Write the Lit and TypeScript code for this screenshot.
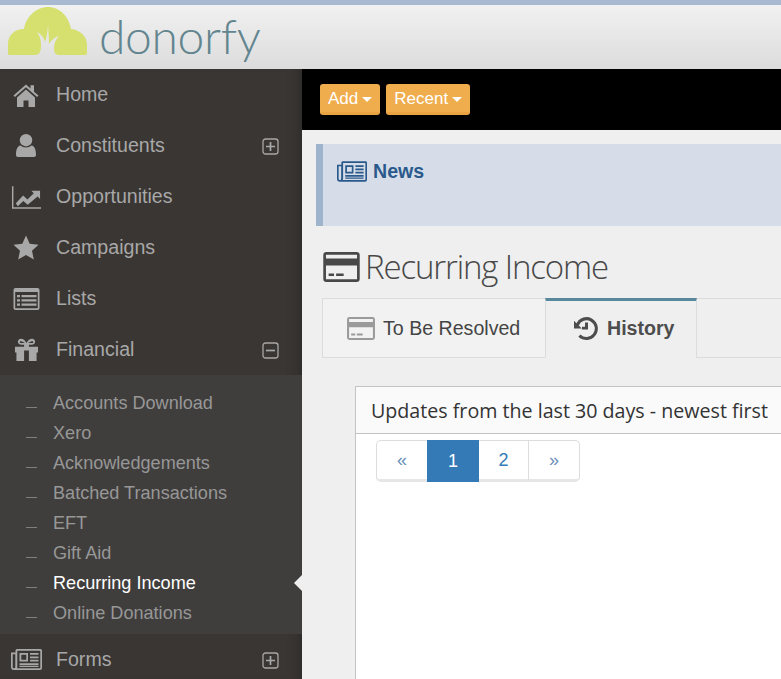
import { LitElement, html, css, svg } from "lit";
import { customElement } from "lit/decorators.js";

const I = {
  home: svg`<path d="M1.500 13.500 14 2.500l4.500 4V3.200h3.500v6.500l4.500 3.800-1.400 1.600L14 5.300 2.900 15.100z"/><path d="M5 15.500 14 7.600l9 7.900V25h-6.500v-6.500h-5V25H5z"/>`,
  user: svg`<circle cx="10" cy="6.200" r="6.200"/><path d="M2 23c-1.200 0-2-.8-2-2 0-5 1.200-9 4.500-9.500 1.500 1.300 3.400 2 5.500 2s4-.7 5.500-2C18.800 12 20 16 20 21c0 1.200-.8 2-2 2z"/>`,
  chart: svg`<path d="M1 1h1.500v21.500H31V24H1z"/><path d="M5 18.500l7.500-8 4.500 4 6.500-6.500-2.500-2.500H30v8.500l-2.500-2.500L17.200 20l-4.500-4L7 21.500z"/>`,
  star: svg`<path d="M13 .5l3.700 8.200 8.800 1-6.500 6 1.800 8.800L13 20.100l-7.800 4.400L7 15.700l-6.500-6 8.800-1z"/>`,
  list: svg`<path fill-rule="evenodd" d="M2.500 1h22A2 2 0 0 1 26.500 3v18a2 2 0 0 1-2 2h-22a2 2 0 0 1-2-2V3a2 2 0 0 1 2-2zm-.3 4v15.800a.5.5 0 0 0 .5.5h21.600a.5.500 0 0 0 .5-.5V5z"/><path d="M4 8h3v2.200H4zm0 4.300h3v2.200H4zm0 4.300h3v2.200H4zM8.500 8h15v2.200h-15zm0 4.300h15v2.200h-15zm0 4.300h15v2.200h-15z"/>`,
  gift: svg`<path fill-rule="evenodd" d="M1 9h9.500V7H8C5 7 4 5.500 4 4s1.200-3.200 3.200-3.200c2.500 0 4.800 2.200 5.800 4.400C14 3 16.300.8 18.800.8 20.800.8 22 2.500 22 4s-1 3-4 3h-2.500v2H25v6h-1.500v9h-8V13h-5v11h-8v-9H1zM7.200 3.300c-1 0-1.200.5-1.200 1s.4 1 1.500 1h3.700C10.500 4.500 8.500 3.300 7.200 3.300zm11.600 0c1 0 1.200.5 1.200 1s-.4 1-1.500 1h-3.700c.7-.8 2.700-2 4-2z"/>`,
  news: svg`<path fill-rule="evenodd" d="M6 0h23.500A1.500 1.500 0 0 1 31 1.500V19a2 2 0 0 1-2 2H3a3 3 0 0 1-3-3V3.500h4.500V1.500A1.500 1.500 0 0 1 6 0zm.300 1.700V18c0 .500-.2 1-.4 1.300H29c.2 0 .3-.1.300-.3V1.700zM1.700 5.200V18a1.300 1.300 0 0 0 2.600 0V5.200z"/><path fill-rule="evenodd" d="M8.500 4h8.500v8.500H8.500zm1.800 1.800v5h5v-5z"/><path d="M19 4h8.500v1.800H19zm0 3.400h8.500v1.800H19zm0 3.400h8.500v1.800H19zM8.500 14.200H27.500V16H8.500zm0 2.600H27.500v1.200H8.500z"/>`,
  card: svg`<path fill-rule="evenodd" d="M3 0h28a3 3 0 0 1 3 3v22a3 3 0 0 1-3 3H3a3 3 0 0 1-3-3V3a3 3 0 0 1 3-3zm-.5 2.500v3.500h29V2.500zm0 10V25.500h29V12.500z"/><path d="M5 20h5v2.500H5zm7 0h7v2.500h-7z"/>`,
  hist: svg`<path d="M13.500 1A11.500 11.500 0 1 1 5.300 20.700l2.200-2.300A8.300 8.300 0 1 0 5.800 9.600l3 3H1V4.800l2.500 2.500A11.500 11.500 0 0 1 13.500 1z"/><path d="M12 6.500h3v7h-6v-2.800h3z"/>`,
};

const icon = (body: unknown, w: number, h: number, vw: number, vh: number, cls = "") =>
  html`<svg class=${cls} width=${w} height=${h} viewBox="0 0 ${vw} ${vh}" fill="currentColor">${body}</svg>`;

const box = (plus: boolean) =>
  html`<svg class="tog" width="17" height="17" viewBox="0 0 17 17" fill="none" stroke="currentColor" stroke-width="1.300">
    <rect x="1" y="1" width="15" height="15" rx="2.500"></rect>
    <path d=${plus ? "M4 8.500h9M8.500 4v9" : "M4 8.500h9"} stroke-width="1.700"></path>
  </svg>`;

const subs = ["Accounts Download", "Xero", "Acknowledgements", "Batched Transactions", "EFT", "Gift Aid", "Recurring Income", "Online Donations"];

@customElement("app-root")
export class AppRoot extends LitElement {
  static styles = css`
    :host { display: block; width: 781px; height: 679px; overflow: hidden; background: #efefef; font-family: "Liberation Sans", Arial, sans-serif; }
    * { box-sizing: border-box; }
    .strip { height: 5px; background: #a9b9d2; }
    .top { height: 64px; display: flex; align-items: flex-start; background: linear-gradient(#f1f1f1, #dcdcdc); }
    .cloud { margin: 2px 0 0 8px; flex: none; }
    .brand { margin: 1px 0 0 11px; font-family: Lato, sans-serif; font-weight: 300; font-size: 48px; line-height: 60px; letter-spacing: -0.35px; color: #62858f; }
    .body { display: flex; height: 610px; }
    .side { width: 302px; flex: none; background: #3a3633; position: relative; box-shadow: inset -12px 0 12px -10px #2c2926; }
    .item { height: 51px; display: flex; align-items: center; color: #a8a8a8; font-size: 19.6px; position: relative; }
    .ico { width: 56px; flex: none; display: flex; justify-content: center; padding-right: 4px; }
    .tog { position: absolute; left: 262px; top: 18px; }
    .sub { height: 259px; padding-top: 13px; background: #403e3d; }
    .sub a { height: 30px; display: flex; align-items: center; color: #979797; font-size: 18.1px; position: relative; padding-left: 53px; }
    .sub a::before { content: ""; position: absolute; left: 26px; top: 19px; width: 11px; height: 1px; background: #7f7f7f; }
    .sub a.on { color: #fff; }
    .sub a.on::after { content: ""; position: absolute; right: 0; top: 7px; border: 8px solid transparent; border-right-color: #efefef; border-left: 0; }
    .main { flex: 1; min-width: 0; overflow: hidden; }
    .bar { height: 61px; background: #000; display: flex; gap: 6px; padding: 15px 0 0 18px; }
    .btn { height: 31px; padding: 2px 8px 0; display: flex; align-items: center; gap: 4px; background: #f0ad4e; border-radius: 3px; border-bottom: 3px solid #e9a343; color: #fff; font-size: 17px; }
    .caret { border: 5.5px solid transparent; border-top-color: #fff; border-bottom: 0; }
    .news { margin: 14px 0 0 14px; height: 82px; background: #d6dde8; border-left: 7px solid #9db4cc; padding: 14px 0 0 14px; display: flex; align-items: flex-start; gap: 6px; color: #2a5a8c; font-size: 19.6px; font-weight: 700; width: 600px; line-height: 27px; }
    .news svg { margin-top: 3px; }
    h1 { margin: 15px 0 5px 21px; height: 52px; display: flex; align-items: center; gap: 5px; color: #484848; font: 300 33px/52px "Open Sans", sans-serif; letter-spacing: -1.15px; }
    .tabs { margin-left: 20px; display: flex; height: 60px; width: 600px; }
    .tab { height: 60px; display: flex; align-items: center; gap: 8px; font-size: 19.6px; color: #444; }
    .t1 { width: 223px; padding-left: 24px; border: 1px solid #dcdcdc; border-right: 0; background: #f2f2f2; }
    .t2 { width: 152px; padding: 0 0 2px 27px; gap: 9px; border-top: 3px solid #57889c; border-right: 1px solid #dcdcdc; border-left: 1px solid #dcdcdc; font-weight: 700; color: #4d4d4d; }
    .fill { flex: 1; border-top: 1px solid #dcdcdc; border-bottom: 1px solid #dcdcdc; }
    .t1 svg { color: #9a9a9a; }
    .panel { margin: 28px 0 0 53px; width: 600px; height: 400px; background: #fff; border: 1px solid #c4c4c4; }
    .phead { height: 47px; padding-left: 15px; display: flex; align-items: center; border-bottom: 1px solid #c4c4c4; background: #fafafa; color: #333; font: 400 19.65px "Open Sans", sans-serif; white-space: nowrap; }
    .pager { margin: 6px 0 0 20px; width: 204px; height: 42px; display: flex; border: 1px solid #ddd; border-bottom: 3px solid #e6e6e6; border-radius: 5px; font-size: 18px; color: #337ab7; }
    .pager span { display: flex; align-items: center; justify-content: center; height: 40px; margin-top: -1px; flex: none; }
    .pager .arr { width: 50px; color: #6a90b8; }
    .pager .cur { width: 52px; background: #337ab7; color: #fff; height: 42px; margin-bottom: -3px; }
    .pager .sep { width: 50px; border-right: 1px solid #ddd; }
  `;

  private nav(name: string, ic: unknown, tog?: boolean) {
    return html`<div class="item"><div class="ico">${ic}</div>${name}${tog === undefined ? "" : box(tog)}</div>`;
  }

  render() {
    return html`
      <div class="strip"></div>
      <header class="top">
        <svg class="cloud" width="80" height="49" viewBox="0 0 80 49">
          <path fill="#d6e06e" d="M1 48Q0 48 0 46V37C0 28 7 22 16 22 18 10 28 0 40 0 52 0 61 10 63 22 72 23 79 29 79 38V46Q79 48 77 48H51C47 48 46 45 46 41 46 36 48 32 51 29 47 30 43 33 41 37 41 30 40 22 40 15 40 22 39 30 37 35 36 31 33 27 29 25 32 29 33 33 33 38 33 44 32 48 27 48Z"/>
        </svg>
        <div class="brand">donorfy</div>
      </header>
      <div class="body">
        <nav class="side">
          ${this.nav("Home", icon(I.home, 28, 26, 28, 26))}
          ${this.nav("Constituents", icon(I.user, 20, 23, 20, 23), true)}
          ${this.nav("Opportunities", icon(I.chart, 31, 24, 32, 24))}
          ${this.nav("Campaigns", icon(I.star, 26, 25, 26, 25))}
          ${this.nav("Lists", icon(I.list, 27, 24, 27, 24))}
          ${this.nav("Financial", icon(I.gift, 25, 24, 26, 25), false)}
          <div class="sub">
            ${subs.map((s) => html`<a class=${s === "Recurring Income" ? "on" : ""}>${s}</a>`)}
          </div>
          ${this.nav("Forms", icon(I.news, 31, 21, 31, 21), true)}
        </nav>
        <main class="main">
          <div class="bar">
            <div class="btn">Add<i class="caret"></i></div>
            <div class="btn">Recent<i class="caret"></i></div>
          </div>
          <div class="news">${icon(I.news, 30, 21, 31, 21)}News</div>
          <h1>${icon(I.card, 37, 30, 34, 28)}Recurring Income</h1>
          <div class="tabs">
            <div class="tab t1">${icon(I.card, 28, 23, 34, 28)}To Be Resolved</div>
            <div class="tab t2">${icon(I.hist, 25, 25, 25, 25)}History</div>
            <div class="fill"></div>
          </div>
          <section class="panel">
            <div class="phead">Updates from the last 30 days - newest first</div>
            <div class="pager">
              <span class="arr">«</span><span class="cur">1</span><span class="sep">2</span><span class="arr">»</span>
            </div>
          </section>
        </main>
      </div>
    `;
  }
}
